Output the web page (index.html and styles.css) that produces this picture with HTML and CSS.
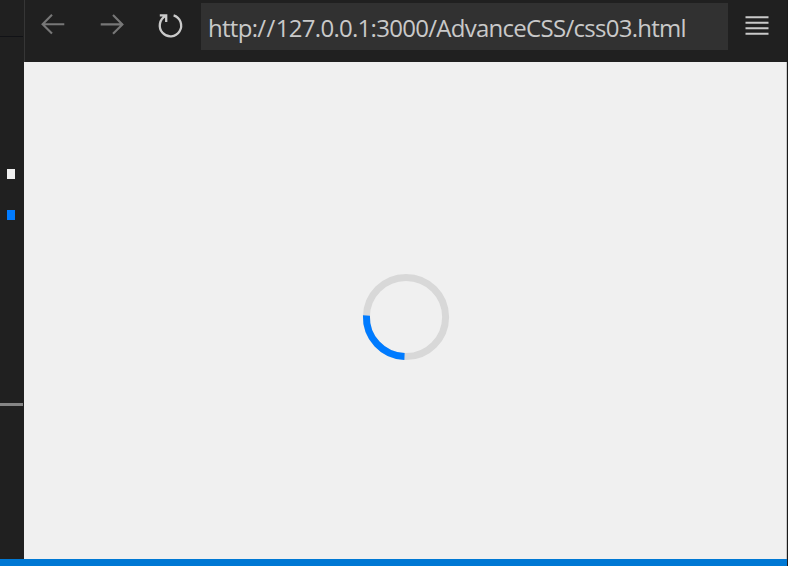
FILE: index.html
```html
<!DOCTYPE html>
<html lang="en">
<head>
<meta charset="utf-8">
<title>css03.html</title>
<link rel="stylesheet" href="styles.css">
</head>
<body>
<div class="window">
  <div class="workspace">
    <aside class="editor">
      <div class="tab-strip"></div>
      <div class="swatch swatch-light"></div>
      <div class="swatch swatch-blue"></div>
      <div class="divider"></div>
    </aside>
    <main class="browser">
      <header class="toolbar">
        <svg class="nav-icons" width="176" height="62" viewBox="0 0 176 62" fill="none">
          <g stroke="#777" stroke-width="2.1">
            <path d="M39.3 24.2H17.5M27 14.8L17.6 24.2L27 33.6"/>
            <path d="M75.7 24.4H98M88 15L97.4 24.4L88 33.8"/>
          </g>
          <path d="M148.6 15.4A10.7 10.7 0 1 1 140.6 16.1M134.8 15.4H141.2V22" stroke="#cacaca" stroke-width="2.3"/>
        </svg>
        <div class="address"><span>http:<span class="slashes">//</span>127.0.0.1:3000/AdvanceCSS/css03.html</span></div>
        <svg class="menu" width="24" height="62" viewBox="0 0 24 62">
          <path d="M.5 17.2H23.5M.5 22.8H23.5M.5 28.2H23.5M.5 33.7H23.5" stroke="#c9c9c9" stroke-width="1.9"/>
        </svg>
      </header>
      <section class="page">
        <svg width="88" height="88" viewBox="-44 -44 88 88" fill="none" stroke-width="7">
          <circle r="39.6" stroke="#d8d8d8"/>
          <path d="M-39.57 -1.5A39.6 39.6 0 0 0 -1.5 39.57" stroke="#007bff"/>
        </svg>
      </section>
    </main>
  </div>
  <footer class="status"></footer>
</div>
</body>
</html>
```
FILE: styles.css
```css
* { box-sizing: border-box; }
body { margin: 0; background: #202020; overflow: hidden; }
svg { display: block; }
.window { width: 788px; height: 566px; display: flex; flex-direction: column; border-right: 1px solid #1b1b1b; }
.workspace { flex: 1; display: flex; }
.editor { width: 24px; background: #202020; }
.tab-strip { height: 37px; margin-right: 1px; border-bottom: 1px solid #111216; }
.swatch { width: 8px; height: 10px; margin-left: 7px; }
.swatch-light { margin-top: 132px; background: #f0f0f0; }
.swatch-blue { margin-top: 31px; background: #007bff; }
.divider { height: 3px; margin: 183px 1px 0 0; background: #858585; }
.browser { flex: 1; display: flex; flex-direction: column; }
.toolbar { height: 62px; display: flex; border-left: 1px solid #363636; background: #202020; }
.address { width: 527px; height: 47px; margin-top: 3px; padding-left: 7px; background: #313131; color: #c9c9c9; font: 24px/50px "Open Sans", "Noto Sans", sans-serif; letter-spacing: -0.72px; white-space: nowrap; }
.slashes { letter-spacing: 0.5px; }
.menu { margin-left: 17px; }
.page { flex: 1; display: flex; align-items: flex-start; justify-content: center; padding: 211px 0 0 1px; background: #f0f0f0; border-right: 1px solid #c8c8c8; }
.status { height: 7px; background: #0078d4; }
```
